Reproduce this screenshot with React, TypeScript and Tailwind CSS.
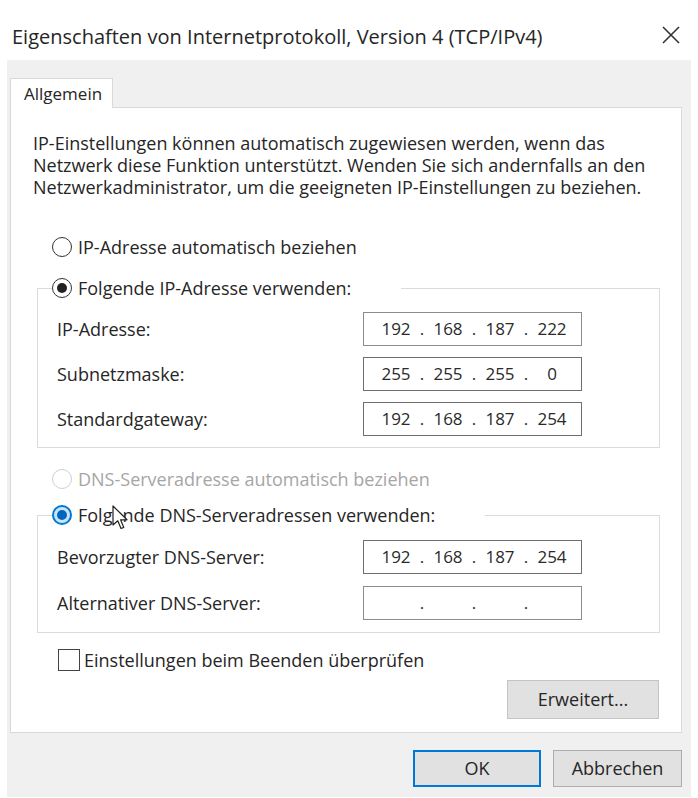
import React from "react";

function Radio({ state }: { state: "off" | "on" | "disabled" | "hover" }) {
  if (state === "hover") {
    return (
      <span className="w-[20px] h-[20px] rounded-full border-[2px] border-[#0078d7] bg-[#cce4f7] flex items-center justify-center shrink-0">
        <span className="w-[10px] h-[10px] rounded-full bg-[#0067c0]" />
      </span>
    );
  }
  if (state === "on") {
    return (
      <span className="w-[20px] h-[20px] rounded-full border-[1.5px] border-[#333] bg-white flex items-center justify-center shrink-0">
        <span className="w-[10px] h-[10px] rounded-full bg-[#222]" />
      </span>
    );
  }
  if (state === "disabled") {
    return <span className="w-[20px] h-[20px] rounded-full border-[1.5px] border-[#cfcfcf] bg-white shrink-0" />;
  }
  return <span className="w-[20px] h-[20px] rounded-full border-[1.5px] border-[#333] bg-white shrink-0" />;
}

function IpBox({ parts, dark }: { parts: string[]; dark?: boolean }) {
  return (
    <div
      className={
        dark
          ? "w-[219px] h-[34px] border-[1.5px] border-[#6e6e6e] bg-white flex items-center pl-[12px] text-[17px] text-[#2a2a2a]"
          : "w-[219px] h-[34px] border-[1.5px] border-[#8c8c8c] bg-white flex items-center pl-[12px] text-[17px] text-[#2a2a2a]"
      }
    >
      <span className="w-[40px] text-center">{parts[0]}</span>
      <span className="w-[12px] text-center">.</span>
      <span className="w-[40px] text-center">{parts[1]}</span>
      <span className="w-[12px] text-center">.</span>
      <span className="w-[40px] text-center">{parts[2]}</span>
      <span className="w-[12px] text-center">.</span>
      <span className="w-[40px] text-center">{parts[3]}</span>
    </div>
  );
}

function Row({ label, parts, dark }: { label: string; parts: string[]; dark?: boolean }) {
  return (
    <div className="flex items-center h-[34px]">
      <span className="w-[311px] pl-[5px] text-[18px]">{label}</span>
      <IpBox parts={parts} dark={dark} />
    </div>
  );
}

export default function App() {
  return (
    <div className="w-[698px] h-[798px] bg-white overflow-hidden relative font-['Open_Sans','Noto_Sans',sans-serif] text-[#262626]">
      <div className="h-[60px] flex items-center justify-between pt-[14px] pl-[12px] pr-[16px]">
        <span className="text-[20px] whitespace-nowrap">Eigenschaften von Internetprotokoll, Version 4 (TCP/IPv4)</span>
        <svg width="22" height="22" viewBox="0 0 22 22" className="mt-[-4px]">
          <path d="M3 3 L19 19 M19 3 L3 19" stroke="#333" strokeWidth="1.6" fill="none" />
        </svg>
      </div>

      <div className="mx-[7px] h-[737px] bg-[#f0f0f0] pt-[18px] pl-[3px] pr-[9px] flex flex-col">
        <div className="w-[103px] h-[30px] bg-white border border-b-0 border-[#d9d9d9] relative z-10 flex items-center pl-[13px] text-[17px]">
          Allgemein
        </div>
        <div className="-mt-px h-[626px] w-[672px] bg-white border border-[#d9d9d9] flex flex-col">
          <p className="pl-[22px] pt-[24px] text-[18px] leading-[22px] whitespace-nowrap">
            IP-Einstellungen können automatisch zugewiesen werden, wenn das
            <br />
            Netzwerk diese Funktion unterstützt. Wenden Sie sich andernfalls an den
            <br />
            Netzwerkadministrator, um die geeigneten IP-Einstellungen zu beziehen.
          </p>

          <div className="mt-[37px] ml-[41px] h-[24px] flex items-center gap-[6px] text-[18px]">
            <Radio state="off" />
            <span>IP-Adresse automatisch beziehen</span>
          </div>

          <fieldset className="mt-[17px] ml-[26px] w-[623px] border border-[#dcdcdc] pl-[14px] pb-[11px]">
            <legend className="h-[24px] flex items-center gap-[6px] pr-[50px] text-[18px]">
              <Radio state="on" />
              <span>Folgende IP-Adresse verwenden:</span>
            </legend>
            <div className="mt-[12px] flex flex-col gap-[11px]">
              <Row label="IP-Adresse:" parts={["192", "168", "187", "222"]} />
              <Row label="Subnetzmaske:" parts={["255", "255", "255", "0"]} dark />
              <Row label="Standardgateway:" parts={["192", "168", "187", "254"]} dark />
            </div>
          </fieldset>

          <div className="mt-[19px] ml-[41px] h-[24px] flex items-center gap-[6px] text-[18px] text-[#a6a6a6]">
            <Radio state="disabled" />
            <span>DNS-Serveradresse automatisch beziehen</span>
          </div>

          <fieldset className="mt-[12px] ml-[26px] w-[623px] border border-[#dcdcdc] pl-[14px] pb-[12px]">
            <legend className="h-[24px] flex items-center gap-[6px] pr-[50px] text-[18px]">
              <Radio state="hover" />
              <span>Folgende DNS-Serveradressen verwenden:</span>
            </legend>
            <div className="mt-[13px] flex flex-col gap-[12px]">
              <Row label="Bevorzugter DNS-Server:" parts={["192", "168", "187", "254"]} dark />
              <Row label="Alternativer DNS-Server:" parts={["", "", "", ""]} />
            </div>
          </fieldset>

          <div className="mt-[15px] ml-[47px] h-[24px] flex items-center gap-[4px] text-[18px]">
            <span className="w-[22px] h-[22px] border-[1.5px] border-[#444] bg-white shrink-0" />
            <span>Einstellungen beim Beenden überprüfen</span>
          </div>

          <div className="mt-[8px] mr-[22px] self-end w-[152px] h-[39px] bg-[#e1e1e1] border border-[#c4c4c4] flex items-center justify-center text-[18px]">
            Erweitert...
          </div>
        </div>

        <div className="mt-[17px] flex justify-end gap-[12px]">
          <div className="w-[128px] h-[37px] bg-[#e1e1e1] border-[2px] border-[#0078d7] flex items-center justify-center text-[18px]">
            OK
          </div>
          <div className="w-[129px] h-[37px] bg-[#e1e1e1] border border-[#adadad] flex items-center justify-center text-[18px]">
            Abbrechen
          </div>
        </div>
      </div>

      <svg className="absolute left-[112px] top-[505px]" width="17" height="26" viewBox="0 0 17 26">
        <path d="M1 1 L1 20 L5.8 15.8 L9 23.5 L11.8 22.4 L8.6 14.8 L15 14.8 Z" fill="#fff" stroke="#222" strokeWidth="1.2" strokeLinejoin="round" />
      </svg>
    </div>
  );
}
